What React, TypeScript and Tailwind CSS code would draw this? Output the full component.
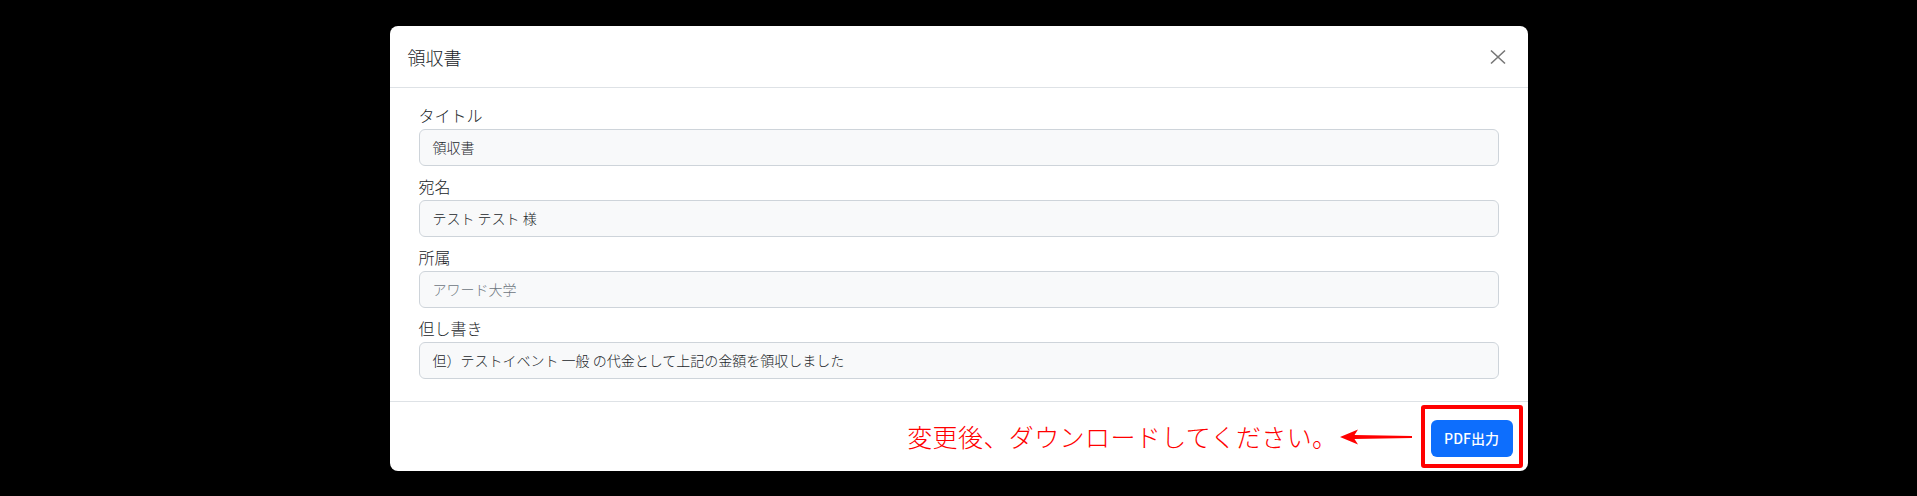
import React from 'react';

const fields = [
  { label: 'タイトル', value: '領収書', muted: false },
  { label: '宛名', value: 'テスト テスト 様', muted: false },
  { label: '所属', value: 'アワード大学', muted: true },
  { label: '但し書き', value: '但）テストイベント 一般 の代金として上記の金額を領収しました', muted: false },
];

const Arrow = () => (
  <svg width="72" height="18" viewBox="0 0 72 18" className="shrink-0">
    <polygon points="0,9 18,1.5 14.5,7 72,8 72,10 14.5,11 18,16.5" fill="#ff0000" />
  </svg>
);

export default function App() {
  return (
    <div
      className="flex h-[496px] w-full justify-center bg-black pt-[26px] font-light"
      style={{ fontFamily: '"Noto Sans CJK JP", "Noto Sans", sans-serif' }}
    >
      <div className="h-[445px] w-[1138px] overflow-hidden rounded-lg bg-white">
        {/* Header */}
        <div className="flex h-[62px] items-center justify-between border-b border-[#dee2e6] pl-[18px] pr-[22px]">
          <h5 className="text-[18px] leading-none text-[#212529]">領収書</h5>
          <button className="flex h-4 w-4 items-center justify-center">
            <svg width="16" height="16" viewBox="0 0 16 16">
              <path d="M1 1.5L15 14.5M15 1.5L1 14.5" stroke="#777" strokeWidth="1.6" fill="none" />
            </svg>
          </button>
        </div>

        {/* Body */}
        <div className="flex flex-col gap-2 px-[29px] pb-[22px] pt-[15px]">
          {fields.map((f) => (
            <div key={f.label} className="flex flex-col">
              <label className="mb-[2px] h-6 text-[16px] leading-6 text-[#212529]">{f.label}</label>
              <div
                className={`flex h-[37px] items-center rounded-md border border-[#ced4da] bg-[#f8f9fa] px-[13px] text-[14px] ${
                  f.muted ? 'text-[#6c757d]' : 'text-[#212529]'
                }`}
              >
                {f.value}
              </div>
            </div>
          ))}
        </div>

        {/* Footer */}
        <div className="flex h-[70px] items-center justify-end border-t border-[#dee2e6] pr-[5px]">
          <span className="mr-[2px] text-[25px] leading-none tracking-[0.4px] text-[#ff0000]">変更後、ダウンロードしてください。</span>
          <Arrow />
          <div className="ml-[9px] flex h-[63px] w-[102px] rounded-[3px] border-4 border-[#ff0000] pl-[6px] pt-[11px]">
            <button className="flex h-[37px] w-[82px] items-center justify-center rounded-md bg-[#0d6efd] text-[14px] font-medium text-white">
              PDF出力
            </button>
          </div>
        </div>
      </div>
    </div>
  );
}
